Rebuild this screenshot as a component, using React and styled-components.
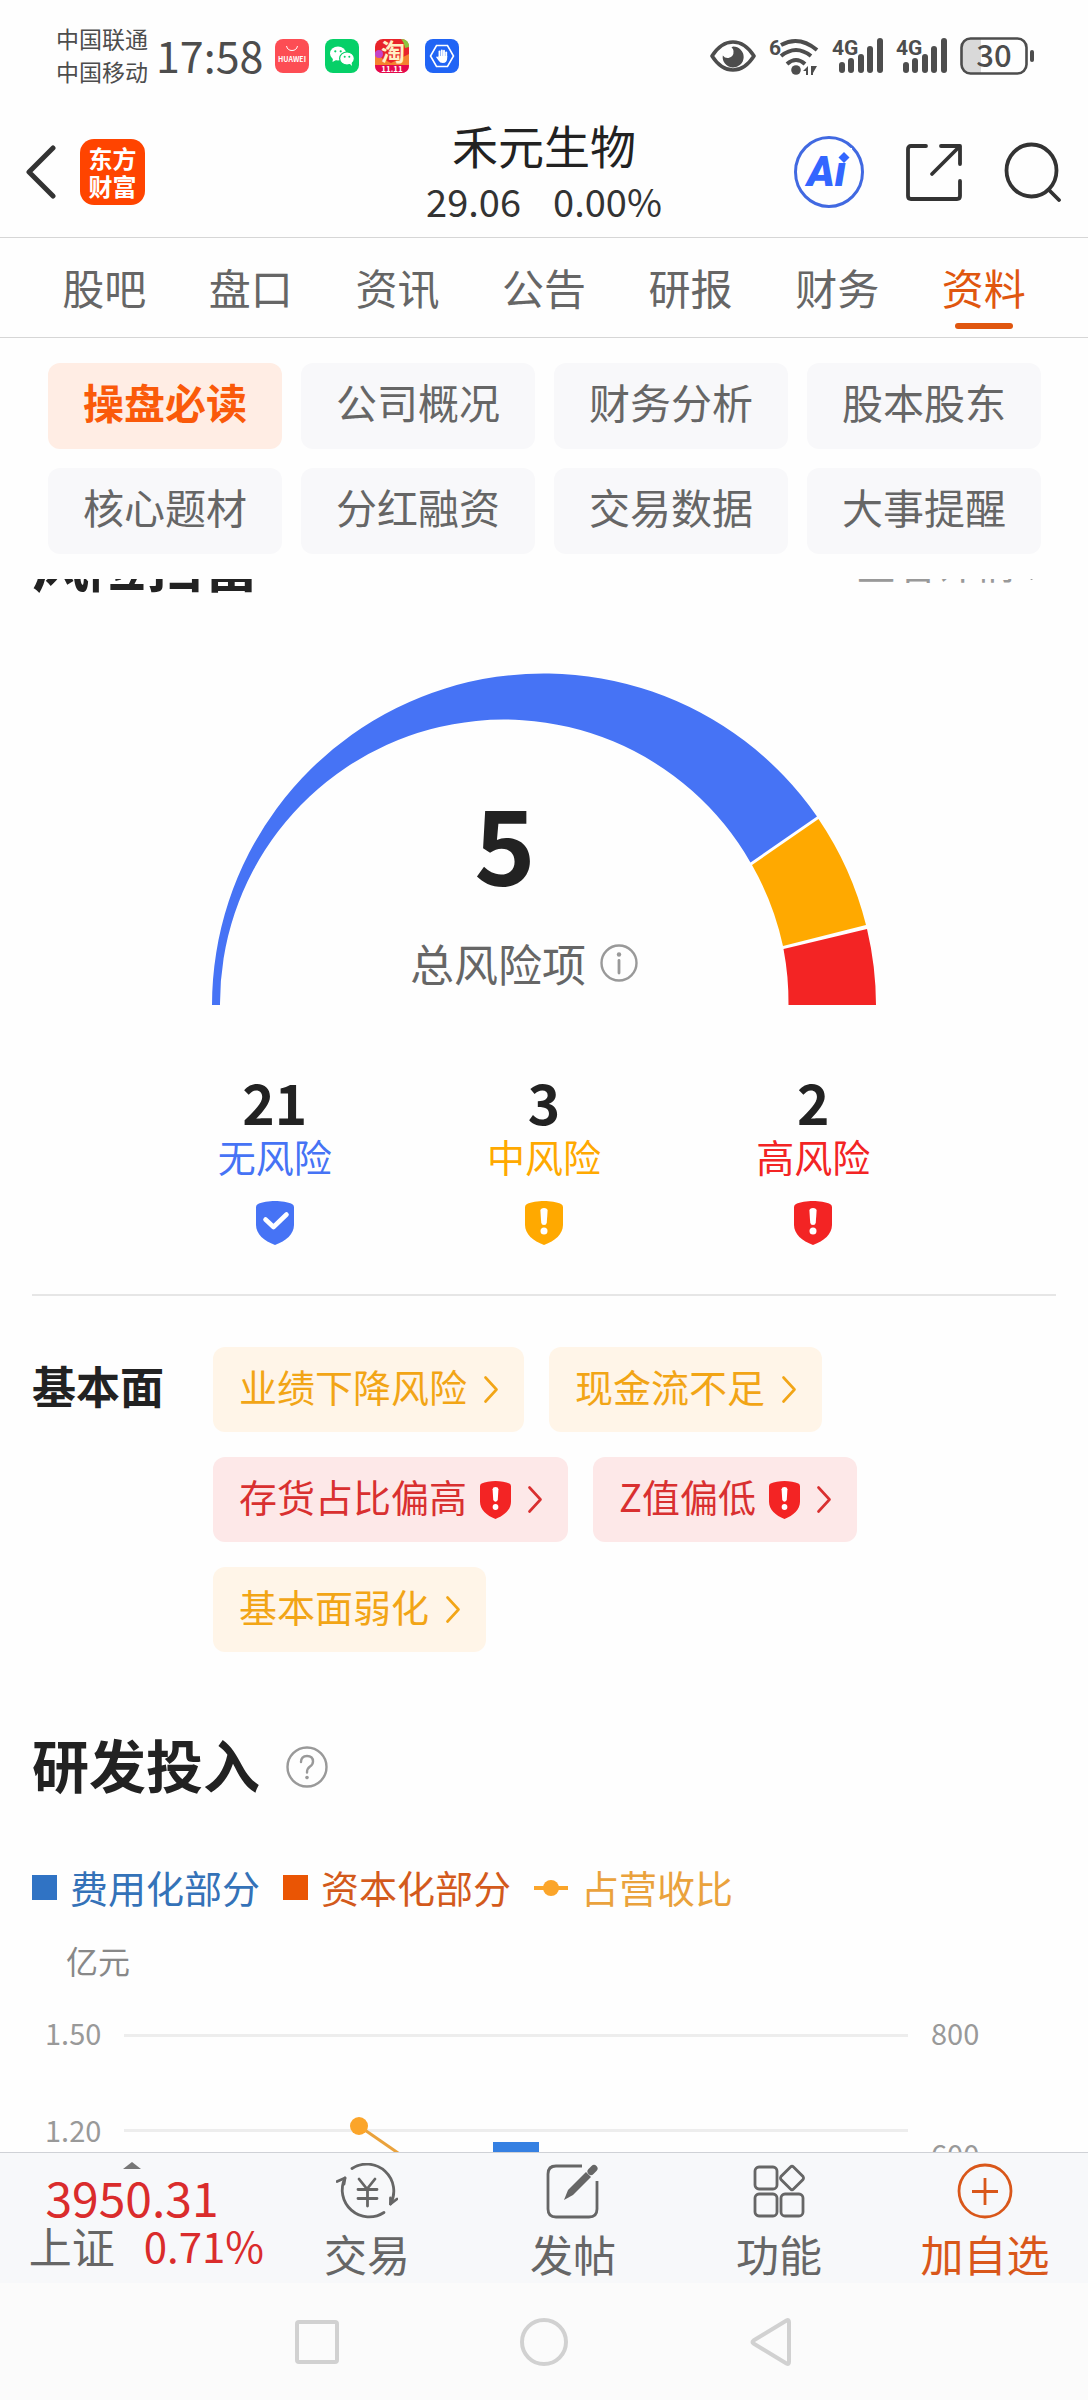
import { useLayoutEffect, useRef, useState } from "react";
import styled, { createGlobalStyle } from "styled-components";

const SCROLL_START = 74;

const TABS = ["股吧", "盘口", "资讯", "公告", "研报", "财务", "资料"];

const SECTIONS = [
  "操盘必读",
  "公司概况",
  "财务分析",
  "股本股东",
  "核心题材",
  "分红融资",
  "交易数据",
  "大事提醒",
];

const LEVELS = [
  { id: "none", count: 21, label: "无风险", color: "#4673f5" },
  { id: "middle", count: 3, label: "中风险", color: "#ffa900" },
  { id: "high", count: 2, label: "高风险", color: "#f32424" },
];

const RISKS = [
  { text: "业绩下降风险" },
  { text: "现金流不足" },
  { text: "存货占比偏高", high: true },
  { text: "Z值偏低", high: true },
  { text: "基本面弱化" },
];

const Shield = ({ width, height, color, check }) => (
  <svg width={width} height={height} viewBox="0 0 38 44" preserveAspectRatio="none">
    <path
      d="M19 0C25 0 32 1 36 3Q38 4 38 6V24C38 33 30 40 19 44C8 40 0 33 0 24V6Q0 4 2 3C6 1 13 0 19 0Z"
      fill={color}
    />
    {check ? (
      <path
        d="M9.5 18.5L17.5 26L30.5 13.5"
        fill="none"
        stroke="#fff"
        strokeWidth="4.6"
        strokeLinecap="round"
        strokeLinejoin="round"
      />
    ) : (
      <>
        <path d="M15.4 9.5Q15.6 7 19 7Q22.4 7 22.6 9.5L21.8 21.5Q21.6 24 19 24Q16.4 24 16.2 21.5Z" fill="#fff" />
        <circle cx="19" cy="30" r="3.5" fill="#fff" />
      </>
    )}
  </svg>
);

const Chevron = () => (
  <svg width="14" height="27" viewBox="0 0 14 27" fill="none" stroke="currentColor" strokeWidth="2.6" strokeLinecap="round" strokeLinejoin="round">
    <path d="M1.5 1.5L12.5 13.5L1.5 25.5" />
  </svg>
);

const Signal = () => (
  <svg width="51" height="36" viewBox="0 0 51 36" fill="#4d4d4d">
    <SmallMark x="0" y="17">
      4G
    </SmallMark>
    <rect x="7" y="24" width="6" height="11" rx="3" />
    <rect x="16" y="20" width="6" height="15" rx="3" />
    <rect x="26" y="16" width="6" height="19" rx="3" />
    <rect x="35" y="8" width="6" height="27" rx="3" />
    <rect x="45" y="0" width="6" height="35" rx="3" />
  </svg>
);

const StatusBar = () => (
  <Status>
    <Carriers>
      <span>中国联通</span>
      <span>中国移动</span>
    </Carriers>
    <Clock>17:58</Clock>
    <AppIcons>
      <svg width="34" height="34" viewBox="0 0 34 34">
        <rect width="34" height="34" rx="8" fill="#fd4d54" />
        <path d="M11.500 7Q12.500 11.500 17 11.500Q21.500 11.500 22.500 7" fill="none" stroke="#fff" strokeWidth="1" />
        <text x="17" y="23" fontSize="7" fontWeight="700" fill="#fff" textAnchor="middle">
          HUAWEI
        </text>
      </svg>
      <svg width="34" height="34" viewBox="0 0 34 34">
        <rect width="34" height="34" rx="8" fill="#06d068" />
        <ellipse cx="13" cy="14.500" rx="8" ry="7" fill="#fff" />
        <path d="M8 19L7.500 23L12 20.500Z" fill="#fff" />
        <ellipse cx="22" cy="19.500" rx="7.400" ry="6.500" fill="#fff" stroke="#06d068" strokeWidth="1.200" />
        <path d="M24 24L27 27L26.500 23Z" fill="#fff" />
        <g fill="#06d068">
          <circle cx="10.300" cy="12.300" r="1.100" />
          <circle cx="15.700" cy="12.300" r="1.100" />
          <circle cx="19.700" cy="17.800" r="1" />
          <circle cx="24.300" cy="17.800" r="1" />
        </g>
      </svg>
      <svg width="34" height="34" viewBox="0 0 34 34">
        <rect width="34" height="34" rx="8" fill="#e8232a" />
        <path d="M0 13L8 20L16 24L34 15V27H0Z" fill="#f5812f" />
        <circle cx="4" cy="15" r="4" fill="#c343c9" />
        <path d="M26 0Q34 0 34 8L30 9Q29 3 26 0Z" fill="#8cc63f" />
        <path d="M0 26H34Q34 34 26 34H8Q0 34 0 26Z" fill="#e5084c" />
        <text x="18" y="22" fontSize="24" fontWeight="700" fill="#fff0c4" textAnchor="middle">
          淘
        </text>
        <text x="17" y="33" fontSize="8" fontWeight="700" fill="#fff" textAnchor="middle">
          11.11
        </text>
      </svg>
      <svg width="34" height="34" viewBox="0 0 34 34">
        <rect width="34" height="34" rx="8" fill="#2064f5" />
        <path d="M11.500 6.500H22.500L28.500 17L22.500 27.500H11.500L5.500 17Z" fill="none" stroke="#fff" strokeWidth="1.600" />
        <g stroke="#fff" strokeWidth="1.900" strokeLinecap="round">
          <path d="M14.500 18V12.500" />
          <path d="M16.800 18V11.500" />
          <path d="M19 18V11.800" />
          <path d="M21.200 18V13.500" />
        </g>
        <path d="M13.500 17H22.200V19Q22.200 24 17.800 24Q15 24 13.500 21.500L11 18Q12 16.800 13.500 18.500Z" fill="#fff" />
      </svg>
    </AppIcons>
    <Indicators>
      <svg width="46" height="32" viewBox="0 0 46 32">
        <path d="M2 16Q11 2 23 2Q35 2 44 16Q35 30 23 30Q11 30 2 16Z" fill="none" stroke="#4d4d4d" strokeWidth="3.600" strokeLinejoin="round" />
        <path d="M23 6.500A10.500 10.500 0 1 1 12.800 15.500Q15 18.500 18.500 18Q24 16.500 23.500 11Q23.500 8.500 21.500 7.500Z" fill="#4d4d4d" />
      </svg>
      <svg width="50" height="37" viewBox="0 0 50 37">
        <SmallMark x="0" y="17">
          6
        </SmallMark>
        <g fill="none" stroke="#4d4d4d" strokeWidth="4">
          <path d="M12 7Q30 -3 48 12" />
          <path d="M12 18Q27 6 42 18" />
          <path d="M18 26Q27 18 36 26" />
        </g>
        <circle cx="27" cy="32" r="4.800" fill="#4d4d4d" />
        <path d="M34 33L39 28V37H37V33ZM42 28H48L44 35V37H42Z" fill="#4d4d4d" />
      </svg>
      <Signal />
      <Signal />
      <svg width="75" height="38" viewBox="0 0 75 38">
        <path d="M10 2H21V36H10Q2 36 2 28V10Q2 2 10 2Z" fill="#d9d9d9" />
        <rect x="1.500" y="1.500" width="65" height="35" rx="9" fill="none" stroke="#4d4d4d" strokeWidth="2.600" />
        <rect x="70" y="13" width="4" height="12" rx="2" fill="#4d4d4d" />
        <text x="34" y="30" fontSize="31" fontWeight="500" fill="#4d4d4d" textAnchor="middle">
          30
        </text>
      </svg>
    </Indicators>
  </Status>
);

const Header = () => (
  <TopBar>
    <Side>
      <IconButton aria-label="返回">
        <svg width="30" height="54" viewBox="0 0 30 54" fill="none" stroke="#333" strokeWidth="5" strokeLinecap="round" strokeLinejoin="round">
          <path d="M27 3L3 27L27 51" />
        </svg>
      </IconButton>
      <Brand>
        <span>东方</span>
        <span>财富</span>
      </Brand>
    </Side>
    <Stock>
      <h1>禾元生物</h1>
      <Price>
        <span>29.06</span>
        <span>0.00%</span>
      </Price>
    </Stock>
    <Side $end>
      <IconButton aria-label="智能助手">
        <svg width="70" height="72" viewBox="0 0 70 72">
          <ellipse cx="35" cy="36" rx="33.500" ry="34.500" fill="none" stroke="#4169e1" strokeWidth="3" />
          <AiText x="13" y="50">
            Ai
          </AiText>
          <rect x="40" y="12" width="18" height="15" fill="#fff" />
          <path d="M50 16L55.500 21.500L50 27L44.500 21.500Z" fill="#3366ff" />
        </svg>
      </IconButton>
      <IconButton aria-label="分享">
        <svg width="56" height="58" viewBox="0 0 56 58" fill="none" stroke="#333" strokeWidth="3.800" strokeLinecap="round" strokeLinejoin="round">
          <path d="M20 3H5Q2 3 2 6V53Q2 56 5 56H51Q54 56 54 53V38" />
          <path d="M35 3H54V21" />
          <path d="M53 4L26 31" />
        </svg>
      </IconButton>
      <IconButton aria-label="搜索">
        <svg width="58" height="60" viewBox="0 0 58 60" fill="none" stroke="#333" strokeWidth="3.800" strokeLinecap="round">
          <ellipse cx="27.500" cy="28.500" rx="25" ry="26" />
          <path d="M45 48L55 58" />
        </svg>
      </IconButton>
    </Side>
  </TopBar>
);

const Gauge = () => (
  <GaugeBox>
    <svg width="664" height="332" viewBox="0 0 664 332">
      <path d="M0 332A332 332 0 0 1 605 143.500L538.500 189.500A284 284 0 0 0 8 332Z" fill="#4673f5" />
      <path d="M606.500 146A332 332 0 0 1 654 252L571 273A284 284 0 0 0 540 192Z" fill="#ffa900" />
      <path d="M655 256A332 332 0 0 1 664 332H576.500A284 284 0 0 0 571.500 276Z" fill="#f32424" />
    </svg>
    <GaugeText>
      <div>
        <Total>5</Total>
        <TotalLabel>
          总风险项
          <svg width="38" height="38" viewBox="0 0 38 38" fill="none" stroke="#999" strokeWidth="2.400">
            <circle cx="19" cy="19" r="17.500" />
            <path d="M19 16.500V29" strokeWidth="2.800" strokeLinecap="round" />
            <circle cx="19" cy="10.500" r="2.200" fill="#999" stroke="none" />
          </svg>
        </TotalLabel>
      </div>
    </GaugeText>
  </GaugeBox>
);

const Chart = () => (
  <ChartSvg viewBox="0 0 1088 320">
    <text x="66" y="61" fontSize="32" fill="#888">
      亿元
    </text>
    <g stroke="#ededed" strokeWidth="3">
      <path d="M124 122.500H908" />
      <path d="M124 217.500H908" />
    </g>
    <g fontSize="29" fill="#999">
      <text x="45" y="132">
        1.50
      </text>
      <text x="45" y="229">
        1.20
      </text>
      <text x="931" y="132">
        800
      </text>
      <text x="931" y="253">
        600
      </text>
    </g>
    <rect x="493" y="229" width="46" height="91" fill="#3580e2" />
    <path d="M359 213L485 300" stroke="#eaa23c" strokeWidth="3" />
    <circle cx="359" cy="213" r="9" fill="#fba52a" />
  </ChartSvg>
);

const BottomBar = () => (
  <Bottom>
    <Quote>
      <Caret />
      <Index>3950.31</Index>
      <Change>
        <span>上证</span>
        <em>0.71%</em>
      </Change>
    </Quote>
    <Action>
      <svg width="62" height="56" viewBox="0 0 62 56" fill="none" stroke="#666" strokeWidth="2.800" strokeLinecap="round" strokeLinejoin="round">
        <path d="M16 5.500A27 27 0 0 1 54.500 41" />
        <path d="M61 36L54.500 41V35" />
        <path d="M48 49.500A27 27 0 0 1 9 15" />
        <path d="M1 18.500L9 15L8 21" />
        <path d="M23 16L31 26L39 16M22 26.500H41M22 35.500H41M31.500 26.500V43" />
      </svg>
      交易
    </Action>
    <Action>
      <svg width="54" height="56" viewBox="0 0 54 56" fill="none" stroke="#666" strokeWidth="2.800">
        <path d="M36 3H10Q2 3 2 11V46Q2 54 10 54H43Q51 54 51 46V18" />
        <path d="M18 37L22 27L40 9L45 14L27 32Z" fill="#666" stroke="none" />
        <path d="M45 8.500L48 5.500" strokeWidth="7" strokeLinecap="round" />
      </svg>
      发帖
    </Action>
    <Action>
      <svg width="52" height="56" viewBox="0 0 52 56" fill="none" stroke="#666" strokeWidth="2.800">
        <rect x="2" y="4" width="22" height="22" rx="4" />
        <rect x="2" y="31" width="22" height="22" rx="4" />
        <rect x="28" y="31" width="22" height="22" rx="4" />
        <path d="M37.500 4Q39 2.500 40.500 4L50 13.500Q51 15 50 16.500L40.500 26Q39 27.500 37.500 26L28 16.500Q27 15 28 13.500Z" />
      </svg>
      功能
    </Action>
    <Action $accent>
      <svg width="56" height="56" viewBox="0 0 56 56" fill="none" stroke="#d9571a" strokeWidth="2.800">
        <circle cx="28" cy="28" r="26" />
        <path d="M15 28.500H41M28 15V42" />
      </svg>
      加自选
    </Action>
  </Bottom>
);

const SystemNav = () => (
  <System>
    <IconButton aria-label="最近任务">
      <svg width="44" height="48" viewBox="0 0 44 48" fill="none" stroke="#d1d1d1" strokeWidth="4">
        <rect x="2" y="4" width="40" height="40" rx="2" />
      </svg>
    </IconButton>
    <IconButton aria-label="主屏幕">
      <svg width="48" height="48" viewBox="0 0 48 48" fill="none" stroke="#d1d1d1" strokeWidth="4">
        <circle cx="24" cy="24" r="22" />
      </svg>
    </IconButton>
    <IconButton aria-label="后退">
      <svg width="42" height="50" viewBox="0 0 42 50" fill="none" stroke="#d1d1d1" strokeWidth="4" strokeLinejoin="round">
        <path d="M36.500 3.500Q39 2 39 5V45Q39 48 36.500 46.500L3.500 26.500Q1.500 25 3.500 23.500Z" />
      </svg>
    </IconButton>
  </System>
);

const App = () => {
  const [tab, setTab] = useState("资料");
  const [section, setSection] = useState("操盘必读");
  const contentRef = useRef(null);

  useLayoutEffect(() => {
    contentRef.current.scrollTop = SCROLL_START;
  }, []);

  return (
    <Screen>
      <GlobalStyle />
      <StatusBar />
      <Header />
      <Tabs>
        {TABS.map((name) => (
          <Tab key={name} $active={name === tab} onClick={() => setTab(name)}>
            {name}
          </Tab>
        ))}
      </Tabs>
      <Sections>
        {SECTIONS.map((name) => (
          <SectionButton
            key={name}
            $active={name === section}
            onClick={() => setSection(name)}
          >
            {name}
          </SectionButton>
        ))}
      </Sections>
      <Content ref={contentRef}>
        <HeadingRow>
          <Heading>风险扫雷</Heading>
          <Detail href="#detail">
            查看详情
            <Chevron />
          </Detail>
        </HeadingRow>
        <Gauge />
        <Levels>
          {LEVELS.map((level) => (
            <Level key={level.id} $color={level.color}>
              <strong>{level.count}</strong>
              <span>{level.label}</span>
              <Shield
                width={38}
                height={44}
                color={level.color}
                check={level.id === "none"}
              />
            </Level>
          ))}
        </Levels>
        <Basics>
          <h3>基本面</h3>
          <Tags>
            {RISKS.map((risk) => (
              <Tag key={risk.text} $high={risk.high}>
                {risk.text}
                {risk.high && <Shield width={31} height={38} color="#f32424" />}
                <Chevron />
              </Tag>
            ))}
          </Tags>
        </Basics>
        <ResearchRow>
          <Heading>研发投入</Heading>
          <HelpButton aria-label="说明">
            <svg width="42" height="42" viewBox="0 0 42 42" fill="none" stroke="#999" strokeWidth="2.400">
              <circle cx="21" cy="21" r="19.500" />
              <path d="M15 16Q15 10 21 10Q27 10 27 15.500Q27 18.500 24 20.500Q21 22.500 21 26.500" strokeLinecap="round" />
              <circle cx="21" cy="31.500" r="1.800" fill="#999" stroke="none" />
            </svg>
          </HelpButton>
        </ResearchRow>
        <Legend>
          <LegendItem $color="#3472b8">
            <Swatch $color="#3073c4" />
            费用化部分
          </LegendItem>
          <LegendItem $color="#d35a1c">
            <Swatch $color="#ea5504" />
            资本化部分
          </LegendItem>
          <LegendItem $color="#eaa23c">
            <svg width="34" height="18" viewBox="0 0 34 18" fill="#fba52a">
              <rect y="8" width="34" height="4" />
              <circle cx="17" cy="10" r="8" />
            </svg>
            占营收比
          </LegendItem>
        </Legend>
        <Chart />
      </Content>
      <BottomBar />
      <SystemNav />
    </Screen>
  );
};

const GlobalStyle = createGlobalStyle`
  * {
    box-sizing: border-box;
  }
  body {
    margin: 0;
    background-color: #fefefe;
    color: #222;
    font-family: "Noto Sans CJK SC", "Noto Sans", sans-serif;
  }
  button {
    padding: 0;
    border: none;
    background: none;
    font-family: inherit;
    cursor: pointer;
  }
  h1, h2, h3 {
    margin: 0;
  }
  svg {
    display: block;
    flex-shrink: 0;
  }
`;
const Screen = styled.div`
  height: 100vh;
  display: flex;
  flex-direction: column;
  overflow: hidden;
`;
const Status = styled.div`
  display: flex;
  align-items: center;
  height: 112px;
  padding: 0 53px 0 56px;
  color: #4d4d4d;
`;
const Carriers = styled.div`
  display: flex;
  flex-direction: column;
  padding-bottom: 3px;
  font-size: 23px;
  line-height: 33px;
`;
const Clock = styled.div`
  margin-left: 8px;
  padding-bottom: 4px;
  font-size: 43px;
  line-height: 60px;
`;
const AppIcons = styled.div`
  display: flex;
  gap: 16px;
  margin-left: 12px;
`;
const Indicators = styled.div`
  display: flex;
  align-items: center;
  gap: 13px;
  margin-left: auto;
`;
const SmallMark = styled.text`
  fill: #4d4d4d;
  font-family: Roboto, sans-serif;
  font-size: 21px;
  font-weight: 700;
`;
const TopBar = styled.header`
  display: grid;
  grid-template-columns: 1fr auto 1fr;
  align-items: center;
  height: 126px;
  padding: 0 26px 5px;
  border-bottom: 1px solid #d6d6d6;
`;
const Side = styled.div`
  display: flex;
  align-items: center;
  gap: ${(props) => (props.$end ? 42 : 24)}px;
  justify-content: ${(props) => (props.$end ? "flex-end" : "flex-start")};
`;
const IconButton = styled.button`
  display: flex;
`;
const HelpButton = styled(IconButton)`
  padding-top: 8px;
`;
const Brand = styled.div`
  display: flex;
  flex-direction: column;
  align-items: center;
  justify-content: center;
  width: 65px;
  height: 66px;
  border-radius: 14px;
  background-color: #ff4400;
  color: #fff;
  font-size: 24px;
  font-weight: 700;
  line-height: 28px;
`;
const Stock = styled.div`
  display: flex;
  flex-direction: column;
  align-items: center;
  h1 {
    font-size: 46px;
    font-weight: 400;
    line-height: 58px;
  }
`;
const Price = styled.div`
  display: flex;
  gap: 32px;
  color: #333;
  font-size: 38px;
  line-height: 56px;
`;
const AiText = styled.text`
  fill: #3366ff;
  font-family: Roboto, sans-serif;
  font-size: 42px;
  font-weight: 900;
  font-style: italic;
`;
const Tabs = styled.nav`
  display: grid;
  grid-template-columns: repeat(7, 1fr);
  padding: 0 31px;
  border-bottom: 1px solid #d6d6d6;
`;
const Tab = styled.button`
  display: flex;
  flex-direction: column;
  align-items: center;
  padding: 17px 0 8px;
  color: ${(props) => (props.$active ? "#e0560f" : "#666")};
  font-size: 42px;
  line-height: 64px;
  &::after {
    content: "";
    width: 58px;
    height: 6px;
    margin-top: 4px;
    border-radius: 3px;
    background-color: ${(props) => (props.$active ? "#e0560f" : "transparent")};
  }
`;
const Sections = styled.div`
  display: grid;
  grid-template-columns: repeat(4, 1fr);
  gap: 19px;
  padding: 25px 47px 25px 48px;
`;
const SectionButton = styled.button`
  height: 86px;
  padding-bottom: 11px;
  border-radius: 12px;
  background-color: ${(props) => (props.$active ? "#ffede4" : "#f8f8fa")};
  color: ${(props) => (props.$active ? "#fa5a0a" : "#666")};
  font-size: 41px;
  font-weight: ${(props) => (props.$active ? 700 : 400)};
  line-height: 60px;
`;
const Content = styled.main`
  flex: 1;
  min-height: 0;
  overflow-y: auto;
  scrollbar-width: none;
`;
const HeadingRow = styled.div`
  display: flex;
  align-items: center;
  justify-content: space-between;
  padding: 17px 44px 71px 32px;
`;
const Heading = styled.h2`
  font-size: 57px;
  font-weight: 700;
  line-height: 80px;
`;
const Detail = styled.a`
  display: flex;
  align-items: center;
  gap: 14px;
  color: #999;
  font-size: 40px;
  line-height: 80px;
  text-decoration: none;
  svg {
    margin-top: 8px;
  }
`;
const GaugeBox = styled.div`
  display: grid;
  justify-content: center;
  > * {
    grid-area: 1 / 1;
  }
`;
const GaugeText = styled.div`
  display: flex;
  align-items: flex-end;
  justify-content: center;
  padding: 0 40px 10px 0;
`;
const Total = styled.div`
  margin-bottom: 30px;
  padding-right: 38px;
  font-size: 104px;
  font-weight: 700;
  line-height: 120px;
  text-align: center;
`;
const TotalLabel = styled.div`
  display: flex;
  align-items: center;
  gap: 14px;
  color: #666;
  font-size: 44px;
  line-height: 64px;
`;
const Levels = styled.div`
  display: grid;
  grid-template-columns: repeat(3, 1fr);
  margin: 0 32px;
  padding: 66px 108px 49px;
  border-bottom: 2px solid #e6e6e6;
`;
const Level = styled.div`
  display: flex;
  flex-direction: column;
  align-items: center;
  strong {
    font-size: 55px;
    line-height: 60px;
  }
  span {
    margin-bottom: 20px;
    color: ${(props) => props.$color};
    font-size: 38px;
    line-height: 50px;
  }
`;
const Basics = styled.section`
  display: grid;
  grid-template-columns: 181px 1fr;
  padding: 51px 32px 71px;
  h3 {
    font-size: 44px;
    font-weight: 700;
    line-height: 76px;
  }
`;
const Tags = styled.div`
  display: flex;
  flex-wrap: wrap;
  gap: 25px;
  max-width: 680px;
`;
const Tag = styled.button`
  display: flex;
  align-items: center;
  height: 85px;
  padding: 0 26px 7px;
  border-radius: 12px;
  background-color: ${(props) => (props.$high ? "#fde8e8" : "#fff5e8")};
  color: ${(props) => (props.$high ? "#d93030" : "#f2a516")};
  font-size: 38px;
  line-height: 56px;
  svg {
    margin: 7px 0 0 13px;
  }
  svg:last-child {
    margin-left: 17px;
  }
`;
const ResearchRow = styled.div`
  display: flex;
  align-items: center;
  gap: 26px;
  padding: 0 32px 58px;
`;
const Legend = styled.div`
  display: flex;
  gap: 23px;
  padding: 0 32px;
`;
const LegendItem = styled.div`
  display: flex;
  align-items: center;
  gap: 13px;
  color: ${(props) => props.$color};
  font-size: 38px;
  line-height: 52px;
`;
const Swatch = styled.i`
  width: 25px;
  height: 25px;
  background-color: ${(props) => props.$color};
`;
const ChartSvg = styled.svg`
  width: 100%;
`;
const Bottom = styled.footer`
  display: grid;
  grid-template-columns: 264px repeat(4, 1fr);
  height: 131px;
  border-top: 1px solid #cfd1d6;
  background-color: #f7f8fa;
`;
const Quote = styled.div`
  display: flex;
  flex-direction: column;
  align-items: center;
  padding-top: 9px;
  color: #da2c2c;
`;
const Caret = styled.i`
  border: 9px solid transparent;
  border-top: none;
  border-bottom: 7px solid #777;
`;
const Index = styled.div`
  font-size: 48px;
  line-height: 54px;
`;
const Change = styled.div`
  display: flex;
  align-items: center;
  align-self: flex-end;
  gap: 29px;
  line-height: 44px;
  span {
    color: #666;
    font-size: 43px;
  }
  em {
    font-size: 42px;
    font-style: normal;
  }
`;
const Action = styled.button`
  display: flex;
  flex-direction: column;
  align-items: center;
  padding-top: 10px;
  color: ${(props) => (props.$accent ? "#d9571a" : "#666")};
  font-size: 43px;
  line-height: 68px;
`;
const System = styled.nav`
  display: grid;
  grid-template-columns: repeat(3, 227px);
  justify-content: center;
  align-items: center;
  justify-items: center;
  height: 117px;
  background-color: #fbfbfb;
`;

export default App;
